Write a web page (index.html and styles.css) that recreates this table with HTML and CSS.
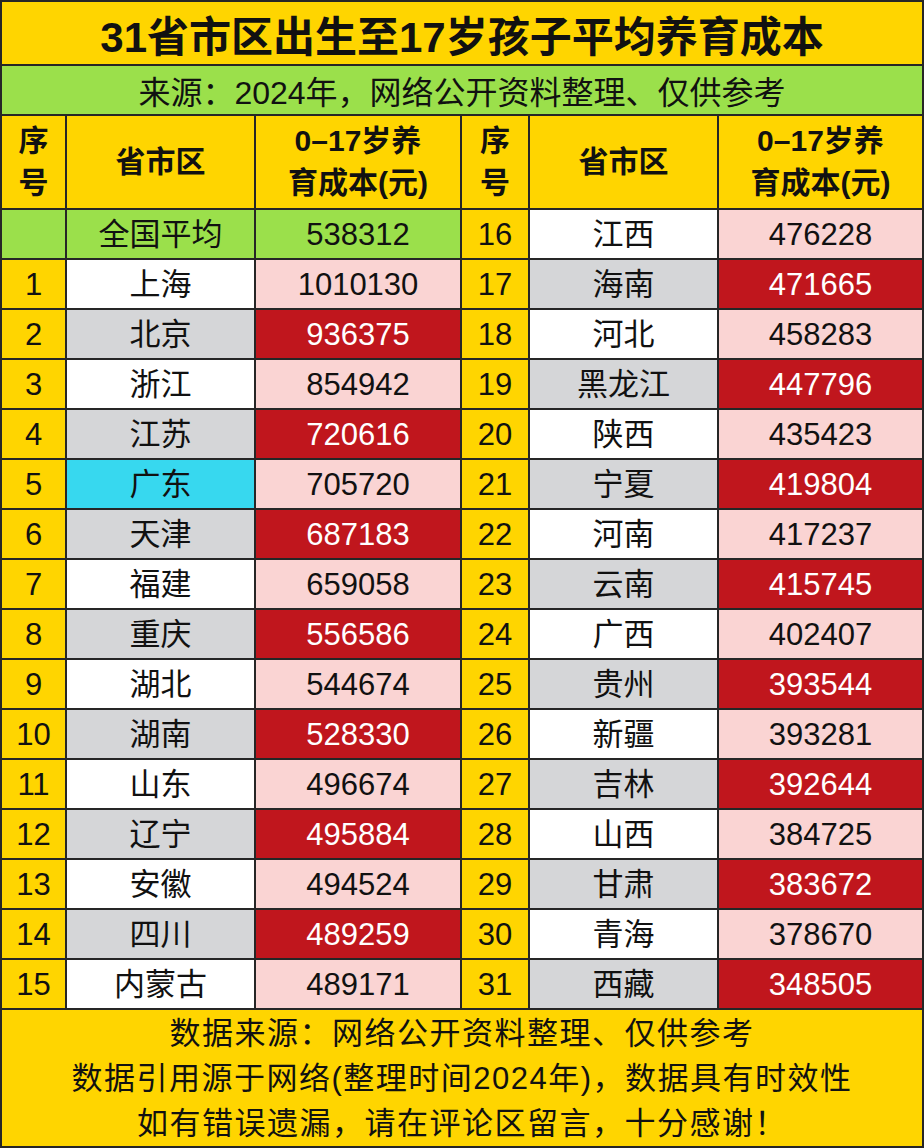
FILE: index.html
```html
<!DOCTYPE html>
<html lang="zh-CN">
<head>
<meta charset="utf-8">
<title>31省市区出生至17岁孩子平均养育成本</title>
<link rel="stylesheet" href="styles.css">
</head>
<body>
<div class="sheet">
  <div class="title">31省市区出生至17岁孩子平均养育成本</div>
  <div class="subtitle">来源：2024年，网络公开资料整理、仅供参考</div>
  <div class="table">
    <div class="hd y">序<br>号</div>
    <div class="hd y">省市区</div>
    <div class="hd y">0–17岁养<br>育成本(元)</div>
    <div class="hd y">序<br>号</div>
    <div class="hd y">省市区</div>
    <div class="hd y">0–17岁养<br>育成本(元)</div>

    <div class="g"></div><div class="g">全国平均</div><div class="g">538312</div>
    <div class="y">16</div><div class="w">江西</div><div class="p">476228</div>

    <div class="y">1</div><div class="w">上海</div><div class="p">1010130</div>
    <div class="y">17</div><div class="gr">海南</div><div class="r">471665</div>

    <div class="y">2</div><div class="gr">北京</div><div class="r">936375</div>
    <div class="y">18</div><div class="w">河北</div><div class="p">458283</div>

    <div class="y">3</div><div class="w">浙江</div><div class="p">854942</div>
    <div class="y">19</div><div class="gr">黑龙江</div><div class="r">447796</div>

    <div class="y">4</div><div class="gr">江苏</div><div class="r">720616</div>
    <div class="y">20</div><div class="w">陕西</div><div class="p">435423</div>

    <div class="y">5</div><div class="c">广东</div><div class="p">705720</div>
    <div class="y">21</div><div class="gr">宁夏</div><div class="r">419804</div>

    <div class="y">6</div><div class="gr">天津</div><div class="r">687183</div>
    <div class="y">22</div><div class="w">河南</div><div class="p">417237</div>

    <div class="y">7</div><div class="w">福建</div><div class="p">659058</div>
    <div class="y">23</div><div class="gr">云南</div><div class="r">415745</div>

    <div class="y">8</div><div class="gr">重庆</div><div class="r">556586</div>
    <div class="y">24</div><div class="w">广西</div><div class="p">402407</div>

    <div class="y">9</div><div class="w">湖北</div><div class="p">544674</div>
    <div class="y">25</div><div class="gr">贵州</div><div class="r">393544</div>

    <div class="y">10</div><div class="gr">湖南</div><div class="r">528330</div>
    <div class="y">26</div><div class="w">新疆</div><div class="p">393281</div>

    <div class="y">11</div><div class="w">山东</div><div class="p">496674</div>
    <div class="y">27</div><div class="gr">吉林</div><div class="r">392644</div>

    <div class="y">12</div><div class="gr">辽宁</div><div class="r">495884</div>
    <div class="y">28</div><div class="w">山西</div><div class="p">384725</div>

    <div class="y">13</div><div class="w">安徽</div><div class="p">494524</div>
    <div class="y">29</div><div class="gr">甘肃</div><div class="r">383672</div>

    <div class="y">14</div><div class="gr">四川</div><div class="r">489259</div>
    <div class="y">30</div><div class="w">青海</div><div class="p">378670</div>

    <div class="y">15</div><div class="w">内蒙古</div><div class="p">489171</div>
    <div class="y">31</div><div class="gr">西藏</div><div class="r">348505</div>
  </div>
  <div class="footer">
    <div>数据来源：网络公开资料整理、仅供参考</div>
    <div>数据引用源于网络(整理时间2024年)，数据具有时效性</div>
    <div>如有错误遗漏，请在评论区留言，十分感谢！</div>
  </div>
</div>
</body>
</html>
```

FILE: styles.css
```css
html, body {
  margin: 0;
  padding: 0;
  background: #262626;
}

body {
  width: 924px;
  height: 1148px;
  font-family: "Liberation Sans", "Noto Sans CJK SC", sans-serif;
  color: #111;
}

.sheet {
  box-sizing: border-box;
  width: 924px;
  height: 1148px;
  padding: 2px;
  background: #262626;
  display: flex;
  flex-direction: column;
  gap: 2px;
}

.title {
  height: 62px;
  background: #ffd500;
  display: flex;
  align-items: center;
  justify-content: center;
  font-size: 42px;
  font-weight: bold;
}

.subtitle {
  height: 48px;
  background: #9be04b;
  display: flex;
  align-items: center;
  justify-content: center;
  font-size: 32px;
}

.table {
  display: grid;
  grid-template-columns: 63px 187px 204px 66px 187px 203px;
  grid-template-rows: 92px repeat(16, 48px);
  gap: 2px;
}

.table > div {
  display: flex;
  align-items: center;
  justify-content: center;
  text-align: center;
  font-size: 31px;
  line-height: 1;
}

.table > .hd {
  font-weight: bold;
  font-size: 30px;
  line-height: 42px;
}

.y { background: #ffd500; }
.g { background: #9be04b; }
.w { background: #ffffff; }
.gr { background: #d5d6d8; }
.c { background: #37d8ef; }
.p { background: #fad4d3; }
.r { background: #c0161d; color: #ffffff; }

.footer {
  flex: 1;
  background: #ffd500;
  display: flex;
  flex-direction: column;
  align-items: center;
  justify-content: center;
  font-size: 31px;
  line-height: 45px;
  letter-spacing: 1.5px;
}
```
